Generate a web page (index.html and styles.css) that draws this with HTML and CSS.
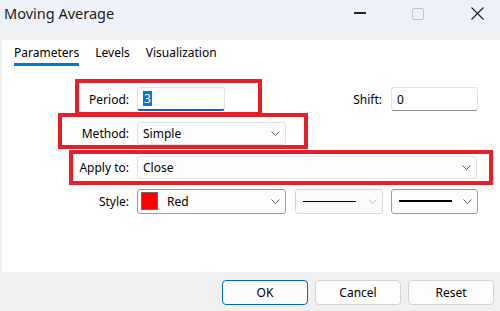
FILE: index.html
```html
<!DOCTYPE html>
<html lang="en">
<head>
  <meta charset="UTF-8" />
  <title>Moving Average</title>
  <link rel="stylesheet" href="styles.css">
</head>
<body>
  <div class="window">
    <div class="titlebar">
      <div class="title">Moving Average</div>
      <div class="winbtns">
        <div class="wb min"></div>
        <div class="wb max"></div>
        <div class="wb close"><svg width="13" height="13" viewBox="0 0 13 13"><path d="M0.5 0.5L12.5 12.5M12.5 0.5L0.5 12.5" stroke="#1a1a1a" stroke-width="1.1"/></svg></div>
      </div>
    </div>

    <div class="panel">
      <div class="tabs">
        <span class="tab active">Parameters</span>
        <span class="tab">Levels</span>
        <span class="tab">Visualization</span>
      </div>

      <div class="form">
        <div class="row">
          <span class="lbl">Period:</span>
          <div class="input focused"><span class="sel">3</span></div>
          <span class="lbl-shift">Shift:</span>
          <div class="input shift">0</div>
        </div>
        <div class="row">
          <span class="lbl">Method:</span>
          <div class="select w149">
            <span class="val">Simple</span>
            <svg class="chev" width="9" height="5" viewBox="0 0 9 5"><path d="M0.5 0.5L4.5 4.5L8.5 0.5" fill="none" stroke="#5a5a5a"/></svg>
          </div>
        </div>
        <div class="row">
          <span class="lbl">Apply to:</span>
          <div class="select w340">
            <span class="val">Close</span>
            <svg class="chev" width="9" height="5" viewBox="0 0 9 5"><path d="M0.5 0.5L4.5 4.5L8.5 0.5" fill="none" stroke="#5a5a5a"/></svg>
          </div>
        </div>
        <div class="row">
          <span class="lbl">Style:</span>
          <div class="select w149 dark">
            <span class="swatch"></span>
            <span class="val">Red</span>
            <svg class="chev" width="9" height="5" viewBox="0 0 9 5"><path d="M0.5 0.5L4.5 4.5L8.5 0.5" fill="none" stroke="#5a5a5a"/></svg>
          </div>
          <div class="select w88 disabled">
            <span class="line thin"></span>
            <svg class="chev" width="9" height="5" viewBox="0 0 9 5"><path d="M0.5 0.5L4.5 4.5L8.5 0.5" fill="none" stroke="#c0c0c0"/></svg>
          </div>
          <div class="select w87 dark">
            <span class="line thick"></span>
            <svg class="chev" width="9" height="5" viewBox="0 0 9 5"><path d="M0.5 0.5L4.5 4.5L8.5 0.5" fill="none" stroke="#5a5a5a"/></svg>
          </div>
        </div>
      </div>
    </div>

    <div class="footer">
      <button class="btn primary">OK</button>
      <button class="btn">Cancel</button>
      <button class="btn">Reset</button>
    </div>

    <!-- annotation boxes drawn over the dialog -->
    <div class="mark m1"></div>
    <div class="mark m2"></div>
    <div class="mark m3"></div>
  </div>
</body>
</html>
```

FILE: styles.css
```css
body {
  margin: 0;
  font-family: 'Noto Sans', 'Open Sans', sans-serif;
  font-size: 12px;
  color: #000;
  background: #f0f0f0;
}
.window {
  position: relative;
  width: 500px;
  height: 311px;
  overflow: hidden;
  background: #f0f0f0;
}

.titlebar {
  height: 32px;
  background: #eff1f8;
  display: flex;
  align-items: flex-start;
}
.title {
  font-size: 14.5px;
  line-height: 16px;
  padding: 5px 0 0 4px;
  color: #1b1b1b;
}
.winbtns {
  margin-left: auto;
  display: flex;
  align-items: flex-start;
  padding: 7px 16px 0 0;
}
.wb {
  flex-shrink: 0;
}
.wb.min {
  width: 12px;
  height: 2px;
  margin-top: 5px;
  background: #222;
}
.wb.max {
  width: 10px;
  height: 10px;
  margin: 1px 0 0 46px;
  border: 1px solid #c4c4c4;
  border-radius: 2px;
}
.wb.close {
  width: 13px;
  height: 13px;
  margin-left: 47px;
}

.panel {
  margin: 8px 0 0 2px;
  height: 232px;
  background: #fff;
}
.tabs {
  display: flex;
  padding: 4px 0 0 12px;
  height: 21px;
}
.tab {
  margin-right: 16px;
  line-height: 18px;
  height: 22px;
  box-sizing: border-box;
}
.tab.active {
  border-bottom: 3px solid #0078d4;
}

.form {
  padding-top: 22px;
  padding-right: 22px;
}
.row {
  display: flex;
  align-items: center;
  height: 24px;
  margin-bottom: 10px;
}
.lbl {
  width: 135px;
  box-sizing: border-box;
  padding-right: 8px;
  text-align: right;
}
.lbl-shift {
  margin-left: auto;
  margin-right: 9px;
}

.input {
  height: 24px;
  box-sizing: border-box;
  border: 1px solid #e3e3e3;
  border-bottom: 1px solid #8a8a8a;
  border-radius: 3px;
  background: #fff;
  display: flex;
  align-items: center;
  padding-left: 5px;
}
.input.focused {
  width: 88px;
  border-bottom: 2px solid #0067c0;
}
.input.shift {
  width: 87px;
}
.sel {
  background: #0078d7;
  color: #fff;
  padding: 0 1px;
  line-height: 15px;
}

.select {
  height: 23px;
  box-sizing: border-box;
  border: 1px solid #e0e0e0;
  border-radius: 3px;
  background: #fdfdfd;
  display: flex;
  align-items: center;
  padding-left: 5px;
}
.select.dark {
  height: 25px;
  border-color: #9a9a9a;
}
.select.disabled {
  height: 25px;
  border-color: #d8d8d8;
  background: #fbfbfb;
  margin-left: 9px;
}
.w149 { width: 149px; }
.w340 { width: 340px; }
.w88 { width: 88px; }
.w87 { width: 87px; margin-left: 8px; }
.chev {
  margin-left: auto;
  margin-right: 5px;
}
.swatch {
  width: 17px;
  height: 18px;
  box-sizing: border-box;
  background: #ff0000;
  border: 1px solid #6b6b6b;
  margin-left: -2px;
  margin-right: 9px;
}
.line {
  display: block;
  width: 53px;
  background: #000;
  margin-left: 2px;
}
.line.thin { height: 1px; }
.line.thick { height: 2px; }

.footer {
  display: flex;
  justify-content: flex-end;
  gap: 7px;
  padding: 8px 6px 0 0;
}
.btn {
  width: 86px;
  height: 25px;
  font-family: inherit;
  font-size: 12px;
  color: #000;
  background: #fdfdfd;
  border: 1px solid #d3d3d3;
  border-radius: 4px;
  padding: 0;
}
.btn.primary {
  border-color: #0067c0;
}

.mark {
  position: absolute;
  border: 4px solid #e5202a;
  box-sizing: border-box;
}
.m1 { left: 75px; top: 79px; width: 187px; height: 37px; }
.m2 { left: 58px; top: 113px; width: 250px; height: 36px; }
.m3 { left: 69px; top: 150px; width: 424px; height: 35px; }
```
